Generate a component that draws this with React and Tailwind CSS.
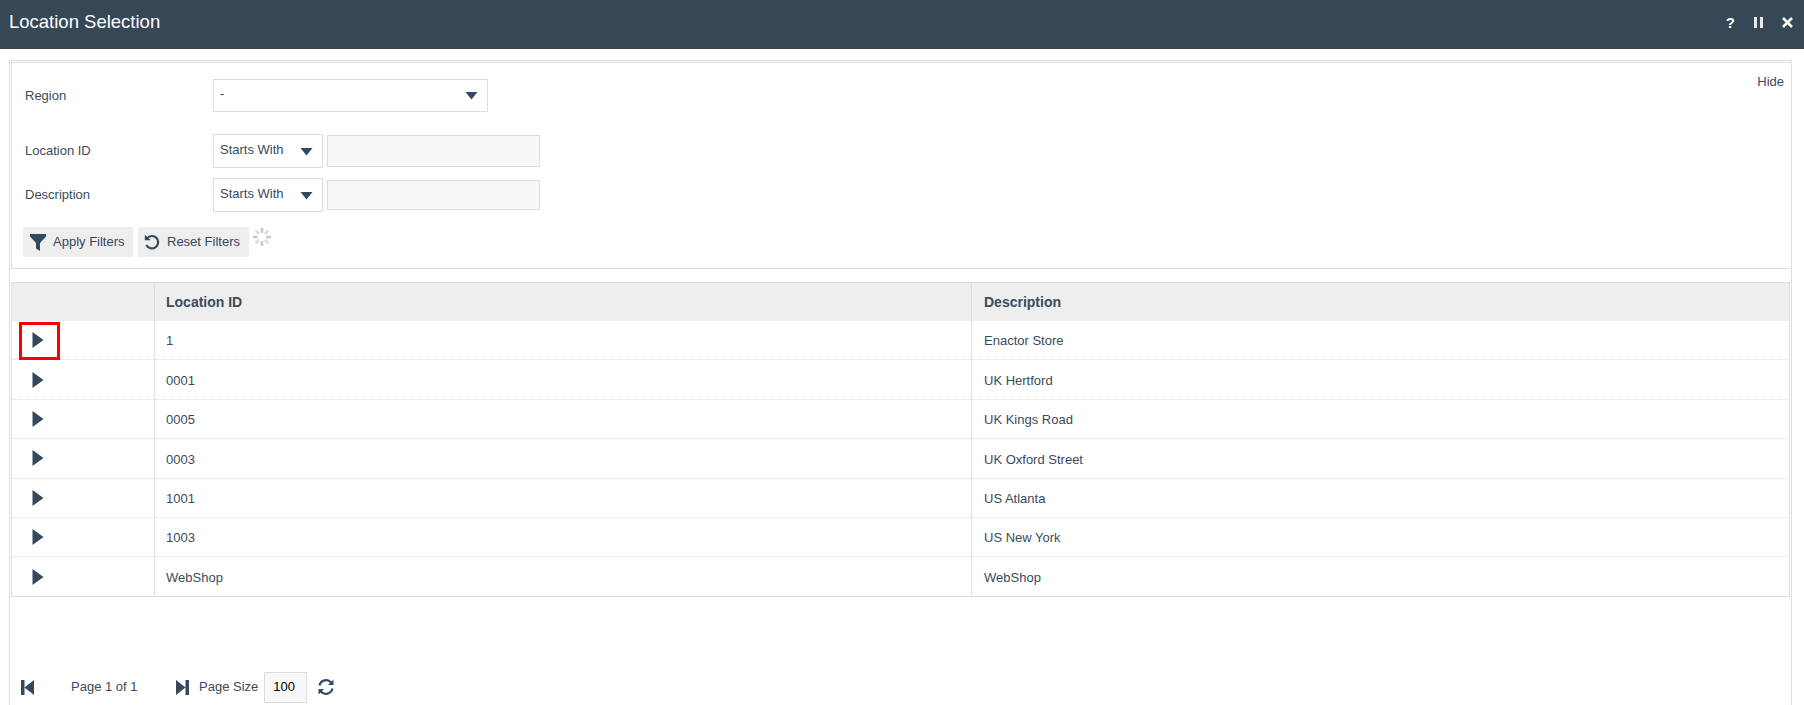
import React from 'react';

const rows = [
  ['1', 'Enactor Store'],
  ['0001', 'UK Hertford'],
  ['0005', 'UK Kings Road'],
  ['0003', 'UK Oxford Street'],
  ['1001', 'US Atlanta'],
  ['1003', 'US New York'],
  ['WebShop', 'WebShop'],
];

const Caret = ({ className = '' }) => (
  <svg width="13" height="9" viewBox="0 0 13 9" className={className}>
    <path d="M0.5 1h12L6.5 8.5z" fill="#34495e" />
  </svg>
);

const Play = () => (
  <svg width="12" height="16" viewBox="0 0 12 16">
    <path d="M0.5 0L11.5 8 0.5 16z" fill="#34495e" />
  </svg>
);

const Spinner = () => (
  <svg width="20" height="20" viewBox="0 0 20 20" className="ml-[3px] self-start">
    {[0, 45, 90, 135, 180, 225, 270, 315].map((a, i) => (
      <path key={a} d="M10 1v4.8" stroke="#c9c9c9" strokeWidth="2.6" opacity={i % 2 ? 0.65 : 1} transform={`rotate(${a} 10 10)`} />
    ))}
  </svg>
);

const OpSelect = () => (
  <div className="flex items-center justify-between w-[110px] h-[34px] border border-[#ddd] bg-white pl-[6px] pr-[9px]">
    <span className="mt-[-3px]">Starts With</span>
    <Caret />
  </div>
);

const Btn = ({ icon, label, className = '' }) => (
  <button className={`flex items-center h-[30px] bg-[#eee] text-[#34495e] ${className}`}>
    {icon}
    {label}
  </button>
);

export default function App() {
  return (
    <div className="h-[705px] w-[1804px] overflow-hidden bg-white flex flex-col font-['Liberation_Sans',sans-serif] text-[13px] text-[#3a4b5c]">
      <header className="h-[49px] shrink-0 bg-[#364756] flex items-center justify-between pl-[9px] pr-[11px] text-white">
        <h1 className="text-[18.5px] mt-[-5px]">Location Selection</h1>
        <div className="flex items-center gap-[19px] mt-[-5px]">
          <span className="font-bold text-[15px] leading-none">?</span>
          <svg width="9" height="11" viewBox="0 0 9 11"><path d="M0 0h3v11H0zM6 0h3v11H6z" fill="#e8e8e8" /></svg>
          <svg width="11" height="11" viewBox="0 0 11 11"><path d="M1 1l9 9M10 1l-9 9" stroke="#fff" strokeWidth="2.6" /></svg>
        </div>
      </header>

      <div className="flex-1 mt-[11px] ml-[9px] mr-[12px] border-t border-l border-r border-[#ddd] pt-[1px] pl-[1px] pr-[1px] flex flex-col">
        <section className="relative h-[207px] shrink-0 border border-[#ddd] border-r-0 pt-[16px]">
          <span className="absolute right-[6px] top-[9px]">Hide</span>
          <div className="flex items-center h-[33px]">
            <div className="w-[201px] pl-[13px]">Region</div>
            <div className="flex items-center justify-between w-[275px] h-[33px] border border-[#ddd] pl-[6px] pr-[9px]">
              <span className="mt-[-3px]">-</span>
              <Caret />
            </div>
          </div>
          <div className="flex flex-col">
            <div className="flex items-center h-[34px] mt-[22px]">
              <div className="w-[201px] pl-[13px]">Location ID</div>
              <OpSelect />
              <div className="ml-[4px] w-[213px] h-[32px] bg-[#f8f8f8] border border-[#ddd]" />
            </div>
            <div className="flex items-center h-[34px] mt-[10px]">
              <div className="w-[201px] pl-[13px]">Description</div>
              <OpSelect />
              <div className="ml-[4px] w-[213px] h-[30px] bg-[#f8f8f8] border border-[#ddd]" />
            </div>
          </div>
          <div className="flex items-center mt-[15px] ml-[11px]">
            <Btn
              className="w-[110px] pl-[7px] gap-[7px]"
              label="Apply Filters"
              icon={
                <svg width="16" height="17" viewBox="0 0 16 17"><path d="M0 0h16v2.5L10 9v8l-4-2.5V9L0 2.5z" fill="#34495e" /></svg>
              }
            />
            <Btn
              className="w-[111px] ml-[5px] pl-[6px] gap-[7px]"
              label="Reset Filters"
              icon={
                <svg width="16" height="16" viewBox="0 0 16 16" fill="none">
                  <path d="M3.2 4.2A6.2 6.2 0 1 1 2.4 11" stroke="#34495e" strokeWidth="2.2" />
                  <path d="M0.8 0.8L6.8 6.2H0.8z" fill="#34495e" />
                </svg>
              }
            />
            <Spinner />
          </div>
        </section>

        <table className="mt-[13px] w-[1779px] border-collapse table-fixed border border-[#ddd]">
          <thead>
            <tr className="h-[38px] bg-[#eee] text-[14px]">
              <th className="w-[143px] border-r border-[#ddd]" />
              <th className="w-[817px] border-r border-[#ddd] text-left font-bold pl-[11px] pt-[1px]">Location ID</th>
              <th className="text-left font-bold pl-[12px] pt-[1px]">Description</th>
            </tr>
          </thead>
          <tbody>
            {rows.map(([id, desc], i) => (
              <tr key={i} className="h-[39.4px] border-b border-dotted border-[#ddd] last:border-solid">
                <td className="relative border-r border-[#e2e2e2] pl-[20px]">
                  <div className="flex items-center"><Play /></div>
                  {i === 0 && <div className="absolute left-[7px] top-[1px] w-[41px] h-[38px] border-[3px] border-[#f00]" />}
                </td>
                <td className="border-r border-[#e2e2e2] pl-[11px] pt-[2px]">{id}</td>
                <td className="pl-[12px] pt-[2px]">{desc}</td>
              </tr>
            ))}
          </tbody>
        </table>

        <div className="flex items-center mt-[75px] ml-[10px]">
          <svg width="13" height="15" viewBox="0 0 13 15"><path d="M0 0h3.5v15H0zM13 0v15L3.5 7.5z" fill="#34495e" /></svg>
          <span className="ml-[37px] w-[105px]">Page 1 of 1</span>
          <svg width="13" height="15" viewBox="0 0 13 15"><path d="M9.5 0H13v15H9.5zM0 0v15l9.5-7.5z" fill="#34495e" /></svg>
          <span className="ml-[10px]">Page Size</span>
          <div className="ml-[6px] w-[43px] h-[31px] bg-[#f8f8f8] border border-[#ddd] flex items-center pl-[8px] text-black">100</div>
          <svg width="18" height="16" viewBox="0 0 18 16" fill="none" className="ml-[10px]">
            <path d="M2.5 6.5A6.8 6.8 0 0 1 14.2 3.5M15.5 9.5A6.8 6.8 0 0 1 3.8 12.5" stroke="#34495e" strokeWidth="2.2" />
            <path d="M16.5 0.5v5.5H11zM1.5 15.5V10H7z" fill="#34495e" />
          </svg>
        </div>
      </div>
    </div>
  );
}
